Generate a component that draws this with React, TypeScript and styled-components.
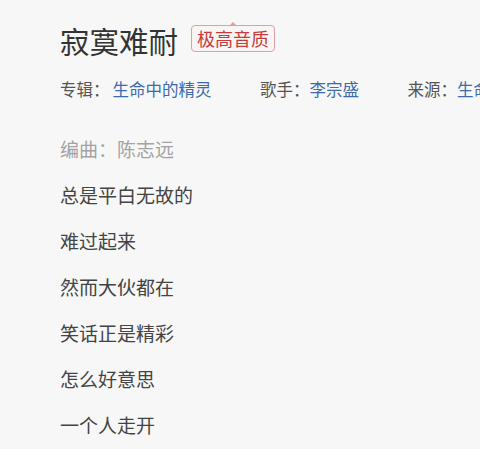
import React from "react";
import styled, { createGlobalStyle } from "styled-components";

const Global = createGlobalStyle`
  html, body { margin: 0; padding: 0; background: #f7f7f7; }
  body { font-family: "Noto Sans CJK SC", "Noto Sans", sans-serif; overflow: hidden; }
`;

const Page = styled.div`
  width: 480px;
  height: 449px;
  padding: 19px 0 0 60px;
  box-sizing: border-box;
  overflow: hidden;
  background: #f7f7f7;
`;

const TitleRow = styled.div`
  display: flex;
  align-items: center;
  gap: 13px;
  height: 42px;
`;

const Title = styled.h1`
  margin: 0;
  font-size: 29.5px;
  font-weight: 400;
  color: #333;
  line-height: 42px;
`;

const Badge = styled.span`
  position: relative;
  display: inline-flex;
  align-items: center;
  height: 25px;
  margin-bottom: 3px;
  padding: 0 5px;
  border: 1px solid #dca2a2;
  border-radius: 4px;
  color: #c93a3a;
  font-size: 18px;
  line-height: 25px;
  background: #f9f5f5;
  &::before {
    content: "";
    position: absolute;
    left: 50%;
    top: -4px;
    margin-left: -4px;
    width: 0;
    height: 0;
    border-left: 4px solid transparent;
    border-right: 4px solid transparent;
    border-bottom: 4px solid #dca2a2;
  }
`;

const Meta = styled.div`
  display: flex;
  white-space: nowrap;
  margin-top: 8px;
  font-size: 16.5px;
  line-height: 40px;
  gap: 48.5px;
`;

const MetaItem = styled.span`
  color: #555;
`;

const MetaLink = styled.span<{ $gap?: number }>`
  color: #3d6bab;
  margin-left: ${(p) => p.$gap ?? 0}px;
`;

const Lyrics = styled.div`
  margin-top: 17px;
  display: flex;
  flex-direction: column;
`;

const Line = styled.p<{ $muted?: boolean }>`
  margin: 0;
  font-size: 19px;
  line-height: 46px;
  color: ${(p) => (p.$muted ? "#a3a3a3" : "#444")};
  white-space: nowrap;
`;

const lines = [
  "总是平白无故的",
  "难过起来",
  "然而大伙都在",
  "笑话正是精彩",
  "怎么好意思",
  "一个人走开",
];

export default function App() {
  return (
    <Page>
      <Global />
      <TitleRow>
        <Title>寂寞难耐</Title>
        <Badge>极高音质</Badge>
      </TitleRow>
      <Meta>
        <MetaItem>
          专辑：<MetaLink $gap={3}>生命中的精灵</MetaLink>
        </MetaItem>
        <MetaItem>
          歌手：<MetaLink>李宗盛</MetaLink>
        </MetaItem>
        <MetaItem>
          来源：<MetaLink>生命中的精灵</MetaLink>
        </MetaItem>
      </Meta>
      <Lyrics>
        <Line $muted>编曲：陈志远</Line>
        {lines.map((l) => (
          <Line key={l}>{l}</Line>
        ))}
      </Lyrics>
    </Page>
  );
}
